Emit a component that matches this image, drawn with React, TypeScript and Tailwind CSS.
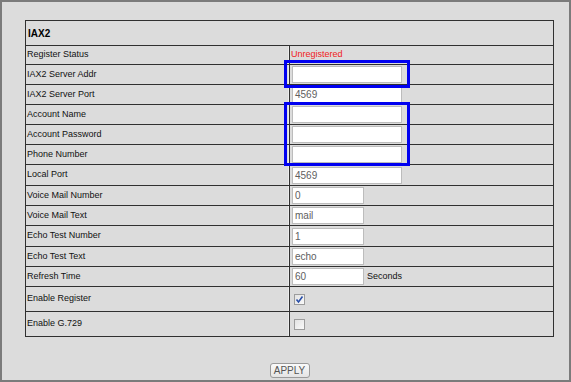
import React from 'react'

type Row = {
  label: string
  h: string
  kind: 'status' | 'input' | 'check'
  wide?: boolean
  value?: string
  suffix?: string
  checked?: boolean
}

// строки таблицы IAX2
const rows: Row[] = [
  { label: 'Register Status', h: 'h-[19px]', kind: 'status' },
  { label: 'IAX2 Server Addr', h: 'h-[20px]', kind: 'input', wide: true, value: '' },
  { label: 'IAX2 Server Port', h: 'h-[20px]', kind: 'input', wide: true, value: '4569' },
  { label: 'Account Name', h: 'h-[20px]', kind: 'input', wide: true, value: '' },
  { label: 'Account Password', h: 'h-[20px]', kind: 'input', wide: true, value: '' },
  { label: 'Phone Number', h: 'h-[20px]', kind: 'input', wide: true, value: '' },
  { label: 'Local Port', h: 'h-[21px]', kind: 'input', wide: true, value: '4569' },
  { label: 'Voice Mail Number', h: 'h-[20px]', kind: 'input', value: '0' },
  { label: 'Voice Mail Text', h: 'h-[20px]', kind: 'input', value: 'mail' },
  { label: 'Echo Test Number', h: 'h-[21px]', kind: 'input', value: '1' },
  { label: 'Echo Test Text', h: 'h-[20px]', kind: 'input', value: 'echo' },
  { label: 'Refresh Time', h: 'h-[20px]', kind: 'input', value: '60', suffix: 'Seconds' },
  { label: 'Enable Register', h: 'h-[25px]', kind: 'check', checked: true },
  { label: 'Enable G.729', h: 'h-[25px]', kind: 'check', checked: false },
]

function CheckBox({ checked }: { checked?: boolean }) {
  return (
    <span className="ml-[4px] flex h-[11px] w-[11px] items-center justify-center border border-[#9c9c9c] bg-gradient-to-br from-[#e2e2e2] to-[#fafafa]">
      {checked && (
        <svg width="9" height="9" viewBox="0 0 9 9">
          <path d="M1.5 4.5 L3.5 7 L7.5 1.5" fill="none" stroke="#2a4fa8" strokeWidth="1.6" />
        </svg>
      )}
    </span>
  )
}

export default function App() {
  return (
    <div
      className="relative h-[382px] w-[571px] border-2 border-[#7b7b7b] bg-[#dcdcdc] text-[9px] text-[#111]"
      style={{ fontFamily: '"Liberation Sans", Arial, sans-serif' }}
    >
      <div className="ml-[23px] mt-[18px] w-[529px] border border-[#303030]">
        {/* Header */}
        <div className="flex h-[24px] items-center pl-[2px] text-[10px] font-bold text-black">IAX2</div>

        {rows.map((r) => (
          <div key={r.label} className={`flex border-t border-[#303030] ${r.h}`}>
            <div className="flex w-[263px] items-center border-r border-[#ececec] pl-px">{r.label}</div>
            <div className="flex flex-1 items-center border-l border-[#303030]">
              {r.kind === 'status' && <span className="pl-px text-[#f02020]">Unregistered</span>}
              {r.kind === 'input' && (
                <>
                  <div
                    className={`ml-[2px] flex h-[17px] items-center border border-[#bcbcbc] bg-white pl-[2px] text-[10px] text-[#606060] ${
                      r.wide ? 'w-[110px]' : 'w-[72px]'
                    }`}
                  >
                    {r.value}
                  </div>
                  {r.suffix && <span className="ml-[3px]">{r.suffix}</span>}
                </>
              )}
              {r.kind === 'check' && <CheckBox checked={r.checked} />}
            </div>
          </div>
        ))}
      </div>

      <div className="ml-[23px] mt-[26px] flex w-[529px] justify-center">
        <button className="flex h-[15px] w-[40px] items-center justify-center rounded-[3px] border border-[#9a9a9a] bg-gradient-to-b from-[#fafafa] to-[#e4e4e4] text-[10px] leading-none text-[#555]">
          APPLY
        </button>
      </div>

      {/* выделение полей */}
      <div className="absolute left-[282px] top-[58px] h-[28px] w-[126px] border-[3px] border-[#0000f0]" />
      <div className="absolute left-[282px] top-[100px] h-[64px] w-[126px] border-[3px] border-[#0000f0]" />
    </div>
  )
}
